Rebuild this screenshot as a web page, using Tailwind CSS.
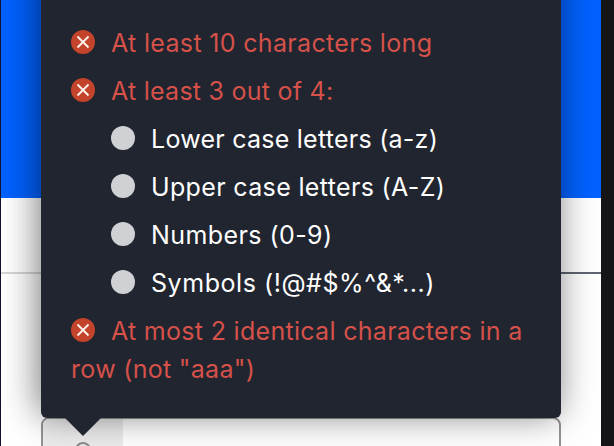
<!DOCTYPE html>
<html lang="en">
<head>
    <meta charset="UTF-8">
    <meta name="viewport" content="width=device-width, initial-scale=1.0">
    <title>Sign Up</title>
    <script src="https://cdn.jsdelivr.net/npm/@tailwindcss/browser@4"></script>
</head>
<body class="h-[446px] overflow-hidden bg-[#151517] font-['Inter','Liberation_Sans',sans-serif]">
    <div class="relative w-[601px] h-[446px] overflow-hidden bg-white border-l border-[#101030]">
        <!-- Page behind the tooltip -->
        <div class="h-[198px] bg-[#0062ff]"></div>
        <div class="h-[76px] flex items-end">
            <div class="w-1/2 h-0.5 bg-[#d6d6d6]"></div>
            <div class="w-1/2 h-0.5 bg-[#5f6672]"></div>
        </div>
        <div class="mt-[143px] ml-10 w-[520px] h-20 flex border-2 border-[#939393] rounded-lg overflow-hidden bg-white">
            <div class="w-20 bg-[#ececec] flex justify-center pt-[23px]">
                <svg class="w-4 h-8" viewBox="0 0 16 32" fill="none" stroke="#8b8b8b" stroke-width="2">
                    <circle cx="8" cy="8" r="7" />
                </svg>
            </div>
        </div>

        <!-- Password rules tooltip -->
        <div class="absolute left-10 -top-10 w-[520px] h-[458px] pt-16 px-[30px] rounded-md bg-[#21252f] shadow-[-3px_-3px_36px_rgba(0,0,0,0.52)] text-[25px] leading-[38px] text-white">
            <ul class="flex flex-col gap-2.5 whitespace-nowrap">
                <li class="h-[38px] text-[#d5514a]">
                    <svg class="inline-block w-6 h-6 mr-4 -mt-1.5 align-middle" viewBox="0 0 24 24" fill="none">
                        <circle cx="12" cy="12" r="12" fill="#c4432b" />
                        <path d="M6.5 6.5l11 11M17.5 6.5l-11 11" stroke="#fff4ec" stroke-width="1.9" />
                    </svg><span class="tracking-[0.33px]">At least 10 characters long</span>
                </li>
                <li class="h-[38px] text-[#d5514a]">
                    <svg class="inline-block w-6 h-6 mr-4 -mt-1.5 align-middle" viewBox="0 0 24 24" fill="none">
                        <circle cx="12" cy="12" r="12" fill="#c4432b" />
                        <path d="M6.5 6.5l11 11M17.5 6.5l-11 11" stroke="#fff4ec" stroke-width="1.9" />
                    </svg><span class="tracking-[0.25px]">At least 3 out of 4:</span>
                </li>
                <li>
                    <ul class="flex flex-col gap-2.5 pl-10">
                        <li class="flex items-center gap-4"><span class="w-6 h-6 -mt-0.5 rounded-full bg-[#d0d1d4]"></span><span class="tracking-[0.25px]">Lower case letters (a-z)</span></li>
                        <li class="flex items-center gap-4"><span class="w-6 h-6 -mt-0.5 rounded-full bg-[#d0d1d4]"></span><span class="tracking-[0.35px]">Upper case letters (A-Z)</span></li>
                        <li class="flex items-center gap-4"><span class="w-6 h-6 -mt-0.5 rounded-full bg-[#d0d1d4]"></span><span class="tracking-[0.42px]">Numbers (0-9)</span></li>
                        <li class="flex items-center gap-4"><span class="w-6 h-6 -mt-0.5 rounded-full bg-[#d0d1d4]"></span><span class="tracking-[0.55px]">Symbols (!@#$%^&amp;*...)</span></li>
                    </ul>
                </li>
                <li class="text-[#d5514a]">
                    <svg class="inline-block w-6 h-6 mr-4 -mt-1.5 align-middle" viewBox="0 0 24 24" fill="none">
                        <circle cx="12" cy="12" r="12" fill="#c4432b" />
                        <path d="M6.5 6.5l11 11M17.5 6.5l-11 11" stroke="#fff4ec" stroke-width="1.9" />
                    </svg><span class="tracking-[0.3px]">At most 2 identical characters in a<br>row (not "aaa")</span>
                </li>
            </ul>
            <svg class="absolute left-6 top-full w-9 h-[18px]" viewBox="0 0 36 18" fill="#21252f">
                <path d="M0 0h36L18 18z" />
            </svg>
        </div>
    </div>
</body>
</html>
